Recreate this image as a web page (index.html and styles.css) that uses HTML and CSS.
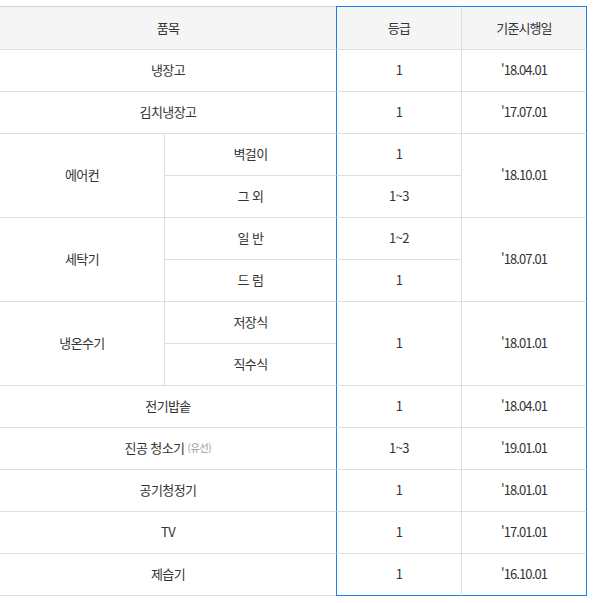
FILE: index.html
```html
<!DOCTYPE html>
<html lang="ko">
<head>
<meta charset="utf-8">
<link rel="stylesheet" href="styles.css">
</head>
<body>
<div class="wrap">
  <div class="grid">
    <div class="c h c12">품목</div>
    <div class="c h c3 top">등급</div>
    <div class="c h c4 top">기준시행일</div>

    <div class="c c12">냉장고</div>
    <div class="c c3">1</div>
    <div class="c c4">'18.04.01</div>

    <div class="c c12">김치냉장고</div>
    <div class="c c3">1</div>
    <div class="c c4">'17.07.01</div>

    <div class="c c1 span2">에어컨</div>
    <div class="c c2">벽걸이</div>
    <div class="c c3">1</div>
    <div class="c c4 span2">'18.10.01</div>
    <div class="c c2">그 외</div>
    <div class="c c3">1~3</div>

    <div class="c c1 span2">세탁기</div>
    <div class="c c2">일 반</div>
    <div class="c c3">1~2</div>
    <div class="c c4 span2">'18.07.01</div>
    <div class="c c2">드 럼</div>
    <div class="c c3">1</div>

    <div class="c c1 span2">냉온수기</div>
    <div class="c c2">저장식</div>
    <div class="c c3 span2">1</div>
    <div class="c c4 span2">'18.01.01</div>
    <div class="c c2">직수식</div>

    <div class="c c12">전기밥솥</div>
    <div class="c c3">1</div>
    <div class="c c4">'18.04.01</div>

    <div class="c c12">진공 청소기 <span class="sub">(유선)</span></div>
    <div class="c c3">1~3</div>
    <div class="c c4">'19.01.01</div>

    <div class="c c12">공기청정기</div>
    <div class="c c3">1</div>
    <div class="c c4">'18.01.01</div>

    <div class="c c12">TV</div>
    <div class="c c3">1</div>
    <div class="c c4">'17.01.01</div>

    <div class="c c12">제습기</div>
    <div class="c c3 last">1</div>
    <div class="c c4 last">'16.10.01</div>
  </div>
</div>
</body>
</html>
```
FILE: styles.css
```css
* { box-sizing: border-box; }
html, body { margin: 0; padding: 0; background: #fff; }
body {
  font-family: "Noto Sans CJK KR", "Noto Sans", sans-serif;
  font-size: 13px;
  color: #333;
}
.wrap { padding-top: 6px; }
.grid {
  display: grid;
  width: 587px;
  grid-template-columns: 165px 171px 126px 125px;
  grid-template-rows: 44px;
  grid-auto-rows: 42px;
}
.c {
  display: flex;
  align-items: center;
  justify-content: center;
  padding-bottom: 2px;
  border-bottom: 1px solid #dedede;
  letter-spacing: -0.6px;
  white-space: nowrap;
}
.h {
  background: #f5f5f5;
  border-top: 1px solid #d0d0d0;
}
.c12 { grid-column: 1 / 3; }
.c1 { grid-column: 1; border-right: 1px solid #dedede; }
.c2 { grid-column: 2; }
.c3 { grid-column: 3; border-left: 1px solid #1a80ea; border-right: 1px solid #dedede; }
.c4 { grid-column: 4; border-right: 1px solid #1a80ea; letter-spacing: -0.9px; }
.top { border-top-color: #1a80ea; }
.last { border-bottom-color: #1a80ea; }
.span2 { grid-row: span 2; }
.sub { font-size: 10px; color: #999; margin-left: 3px; letter-spacing: -0.3px; }
```
